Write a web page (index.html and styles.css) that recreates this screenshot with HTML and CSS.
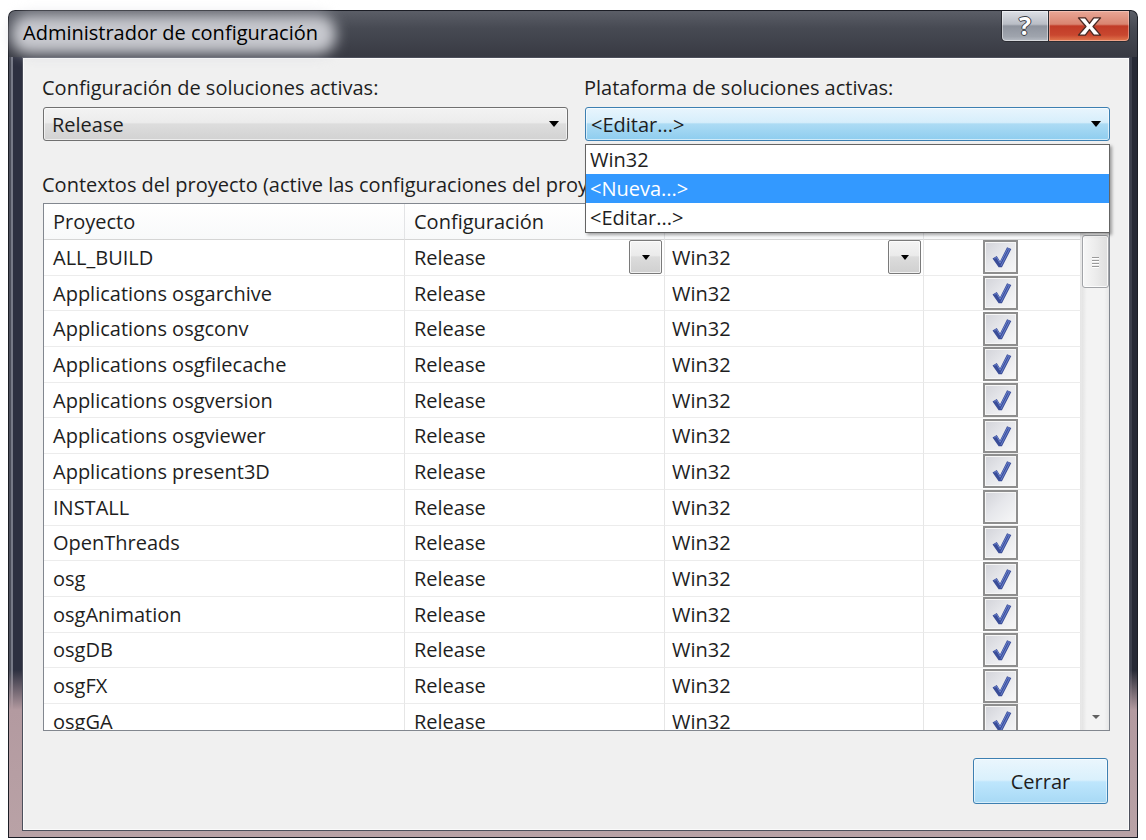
FILE: index.html
```html
<!DOCTYPE html>
<html lang="es">
<head>
<meta charset="utf-8">
<title>Administrador de configuración</title>
<link rel="stylesheet" href="styles.css">
</head>
<body>
<div class="window">
  <div class="titlebar">
    <div class="title"><span class="title-glow"></span><span class="title-text">Administrador de configuración</span></div>
    <div class="caption-buttons">
      <button class="cap cap-help" type="button"><span class="help-glyph">?</span></button>
      <button class="cap cap-close" type="button">
        <svg width="27" height="21" viewBox="0 0 22 17"><path d="M2 1.5H7.6L11 6L14.4 1.5H20L13.9 8.5L20 15.5H14.4L11 11L7.6 15.5H2L8.1 8.5Z" fill="#fff" stroke="#4a2a24" stroke-width="1.1" stroke-linejoin="round"/></svg>
      </button>
    </div>
  </div>

  <div class="client">
    <div class="selectors">
      <div class="field">
        <div class="field-label">Configuración de soluciones activas:</div>
        <div class="combo"><span class="combo-text">Release</span><span class="tri"></span></div>
      </div>
      <div class="field">
        <div class="field-label">Plataforma de soluciones activas:</div>
        <div class="combo-wrap">
          <div class="combo combo-open"><span class="combo-text">&lt;Editar...&gt;</span><span class="tri"></span></div>
          <ul class="combo-list">
            <li>Win32</li>
            <li class="selected">&lt;Nueva...&gt;</li>
            <li>&lt;Editar...&gt;</li>
          </ul>
        </div>
      </div>
    </div>

    <div class="contexts-label">Contextos del proyecto (active las configuraciones del proyecto que desea compilar o implementar):</div>

    <div class="grid">
      <div class="grid-body">
        <div class="row row-head">
          <div class="cell">Proyecto</div>
          <div class="cell">Configuración</div>
          <div class="cell"></div>
          <div class="cell"></div>
        </div>
        <div class="row">
          <div class="cell">ALL_BUILD</div>
          <div class="cell cell-edit">Release<span class="cell-drop"><span class="tri"></span></span></div>
          <div class="cell cell-edit">Win32<span class="cell-drop"><span class="tri"></span></span></div>
          <div class="cell cell-check"><span class="check on"><svg viewBox="0 0 33 32"><path d="M8 17.5L12.5 15L16 20.5L23.5 5.5L28 7.5L18 27H14.5Z" fill="#3a4d98"/><path d="M10 17.5L12.3 16.4L16.1 22.6L24.2 7L26 7.9L17 25.5" fill="none" stroke="#6f86d2" stroke-width="1"/></svg></span></div>
        </div>
        <div class="row">
          <div class="cell">Applications osgarchive</div>
          <div class="cell">Release</div>
          <div class="cell">Win32</div>
          <div class="cell cell-check"><span class="check on"><svg viewBox="0 0 33 32"><path d="M8 17.5L12.5 15L16 20.5L23.5 5.5L28 7.5L18 27H14.5Z" fill="#3a4d98"/><path d="M10 17.5L12.3 16.4L16.1 22.6L24.2 7L26 7.9L17 25.5" fill="none" stroke="#6f86d2" stroke-width="1"/></svg></span></div>
        </div>
        <div class="row">
          <div class="cell">Applications osgconv</div>
          <div class="cell">Release</div>
          <div class="cell">Win32</div>
          <div class="cell cell-check"><span class="check on"><svg viewBox="0 0 33 32"><path d="M8 17.5L12.5 15L16 20.5L23.5 5.5L28 7.5L18 27H14.5Z" fill="#3a4d98"/><path d="M10 17.5L12.3 16.4L16.1 22.6L24.2 7L26 7.9L17 25.5" fill="none" stroke="#6f86d2" stroke-width="1"/></svg></span></div>
        </div>
        <div class="row">
          <div class="cell">Applications osgfilecache</div>
          <div class="cell">Release</div>
          <div class="cell">Win32</div>
          <div class="cell cell-check"><span class="check on"><svg viewBox="0 0 33 32"><path d="M8 17.5L12.5 15L16 20.5L23.5 5.5L28 7.5L18 27H14.5Z" fill="#3a4d98"/><path d="M10 17.5L12.3 16.4L16.1 22.6L24.2 7L26 7.9L17 25.5" fill="none" stroke="#6f86d2" stroke-width="1"/></svg></span></div>
        </div>
        <div class="row">
          <div class="cell">Applications osgversion</div>
          <div class="cell">Release</div>
          <div class="cell">Win32</div>
          <div class="cell cell-check"><span class="check on"><svg viewBox="0 0 33 32"><path d="M8 17.5L12.5 15L16 20.5L23.5 5.5L28 7.5L18 27H14.5Z" fill="#3a4d98"/><path d="M10 17.5L12.3 16.4L16.1 22.6L24.2 7L26 7.9L17 25.5" fill="none" stroke="#6f86d2" stroke-width="1"/></svg></span></div>
        </div>
        <div class="row">
          <div class="cell">Applications osgviewer</div>
          <div class="cell">Release</div>
          <div class="cell">Win32</div>
          <div class="cell cell-check"><span class="check on"><svg viewBox="0 0 33 32"><path d="M8 17.5L12.5 15L16 20.5L23.5 5.5L28 7.5L18 27H14.5Z" fill="#3a4d98"/><path d="M10 17.5L12.3 16.4L16.1 22.6L24.2 7L26 7.9L17 25.5" fill="none" stroke="#6f86d2" stroke-width="1"/></svg></span></div>
        </div>
        <div class="row">
          <div class="cell">Applications present3D</div>
          <div class="cell">Release</div>
          <div class="cell">Win32</div>
          <div class="cell cell-check"><span class="check on"><svg viewBox="0 0 33 32"><path d="M8 17.5L12.5 15L16 20.5L23.5 5.5L28 7.5L18 27H14.5Z" fill="#3a4d98"/><path d="M10 17.5L12.3 16.4L16.1 22.6L24.2 7L26 7.9L17 25.5" fill="none" stroke="#6f86d2" stroke-width="1"/></svg></span></div>
        </div>
        <div class="row">
          <div class="cell">INSTALL</div>
          <div class="cell">Release</div>
          <div class="cell">Win32</div>
          <div class="cell cell-check"><span class="check"></span></div>
        </div>
        <div class="row">
          <div class="cell">OpenThreads</div>
          <div class="cell">Release</div>
          <div class="cell">Win32</div>
          <div class="cell cell-check"><span class="check on"><svg viewBox="0 0 33 32"><path d="M8 17.5L12.5 15L16 20.5L23.5 5.5L28 7.5L18 27H14.5Z" fill="#3a4d98"/><path d="M10 17.5L12.3 16.4L16.1 22.6L24.2 7L26 7.9L17 25.5" fill="none" stroke="#6f86d2" stroke-width="1"/></svg></span></div>
        </div>
        <div class="row">
          <div class="cell">osg</div>
          <div class="cell">Release</div>
          <div class="cell">Win32</div>
          <div class="cell cell-check"><span class="check on"><svg viewBox="0 0 33 32"><path d="M8 17.5L12.5 15L16 20.5L23.5 5.5L28 7.5L18 27H14.5Z" fill="#3a4d98"/><path d="M10 17.5L12.3 16.4L16.1 22.6L24.2 7L26 7.9L17 25.5" fill="none" stroke="#6f86d2" stroke-width="1"/></svg></span></div>
        </div>
        <div class="row">
          <div class="cell">osgAnimation</div>
          <div class="cell">Release</div>
          <div class="cell">Win32</div>
          <div class="cell cell-check"><span class="check on"><svg viewBox="0 0 33 32"><path d="M8 17.5L12.5 15L16 20.5L23.5 5.5L28 7.5L18 27H14.5Z" fill="#3a4d98"/><path d="M10 17.5L12.3 16.4L16.1 22.6L24.2 7L26 7.9L17 25.5" fill="none" stroke="#6f86d2" stroke-width="1"/></svg></span></div>
        </div>
        <div class="row">
          <div class="cell">osgDB</div>
          <div class="cell">Release</div>
          <div class="cell">Win32</div>
          <div class="cell cell-check"><span class="check on"><svg viewBox="0 0 33 32"><path d="M8 17.5L12.5 15L16 20.5L23.5 5.5L28 7.5L18 27H14.5Z" fill="#3a4d98"/><path d="M10 17.5L12.3 16.4L16.1 22.6L24.2 7L26 7.9L17 25.5" fill="none" stroke="#6f86d2" stroke-width="1"/></svg></span></div>
        </div>
        <div class="row">
          <div class="cell">osgFX</div>
          <div class="cell">Release</div>
          <div class="cell">Win32</div>
          <div class="cell cell-check"><span class="check on"><svg viewBox="0 0 33 32"><path d="M8 17.5L12.5 15L16 20.5L23.5 5.5L28 7.5L18 27H14.5Z" fill="#3a4d98"/><path d="M10 17.5L12.3 16.4L16.1 22.6L24.2 7L26 7.9L17 25.5" fill="none" stroke="#6f86d2" stroke-width="1"/></svg></span></div>
        </div>
        <div class="row">
          <div class="cell">osgGA</div>
          <div class="cell">Release</div>
          <div class="cell">Win32</div>
          <div class="cell cell-check"><span class="check on"><svg viewBox="0 0 33 32"><path d="M8 17.5L12.5 15L16 20.5L23.5 5.5L28 7.5L18 27H14.5Z" fill="#3a4d98"/><path d="M10 17.5L12.3 16.4L16.1 22.6L24.2 7L26 7.9L17 25.5" fill="none" stroke="#6f86d2" stroke-width="1"/></svg></span></div>
        </div>
      </div>
      <div class="vscroll">
        <div class="sb-btn"><span class="sb-up"></span></div>
        <div class="sb-thumb"><span class="grip"></span><span class="grip"></span><span class="grip"></span><span class="grip"></span></div>
        <div class="sb-track"></div>
        <div class="sb-btn"><span class="sb-down"></span></div>
      </div>
    </div>

    <div class="actions">
      <button class="btn-default" type="button">Cerrar</button>
    </div>
  </div>
</div>
</body>
</html>
```
FILE: styles.css
```css
* { box-sizing: border-box; }

body {
  margin: 0;
  background: #ffffff;
  font-family: "Open Sans", "Noto Sans", sans-serif;
  color: #1e1e1e;
}

/* Aero glass window frame */
.window {
  margin: 10px 0 0 8px;
  width: 1130px;
  height: 828px;
  padding: 0 8px 7px 14px;
  display: flex;
  flex-direction: column;
  border-radius: 7px 7px 0 0;
  box-shadow: inset 0 0 0 1px #1b1d25;
  background:
    linear-gradient(to bottom, #8a8d95 0, #5b5e67 1px, #474a53 18px, #383a43 47px) top / 100% 47px no-repeat,
    linear-gradient(to bottom, rgba(0,0,0,0) 0, rgba(0,0,0,0) 660px, #b39aa0 700px, #b9a2a6 100%),
    linear-gradient(to right, #1d1f27 0, #1d1f27 1px, #4a4d59 1px, #4a4d59 3px, #767986 3px, #767986 5px, #2d3040 5px, #2d3040 13px, #2d3040 calc(100% - 8px), #3d404d calc(100% - 8px), #3d404d calc(100% - 6px), #272a36 calc(100% - 6px));
}

.titlebar {
  height: 47px;
  flex: none;
  display: flex;
  justify-content: space-between;
  align-items: flex-start;
}

.title {
  position: relative;
  margin: 10px 0 0 1px;
  line-height: 26px;
}

.title-glow {
  position: absolute;
  left: -12px;
  right: -18px;
  top: -5px;
  bottom: -7px;
  border-radius: 18px;
  background: rgba(214, 215, 221, 0.9);
  filter: blur(7px);
}

.title-text {
  position: relative;
  font-size: 20px;
  color: #000;
}

.caption-buttons {
  display: flex;
  margin-top: 1px;
}

.cap {
  height: 31px;
  padding: 0;
  border: 1px solid #2b2c33;
  border-top: none;
  display: flex;
  align-items: center;
  justify-content: center;
  font-family: inherit;
}

.cap-help {
  width: 47px;
  border-radius: 0 0 0 5px;
  border-right: none;
  background: linear-gradient(to bottom, #dde0e6 0%, #b9bdc5 44%, #8f949e 50%, #9fa4ad 85%, #b7bcc4 100%);
  box-shadow: inset 0 0 0 1px rgba(255,255,255,0.45);
}

.help-glyph {
  font-size: 25px;
  font-weight: 700;
  line-height: 1;
  color: #fff;
  text-shadow: 1px 0 0 #3b3e46, -1px 0 0 #3b3e46, 0 1px 0 #3b3e46, 0 -1px 0 #3b3e46;
  margin-top: -2px;
}

.cap-close {
  width: 82px;
  border-radius: 0 0 5px 0;
  background: linear-gradient(to bottom, #e9a796 0%, #d98470 44%, #c13b27 50%, #c9472f 80%, #e2794f 100%);
  box-shadow: inset 0 0 0 1px rgba(255,220,210,0.45);
}

.cap-close svg { display: block; }

/* dialog client area */
.client {
  flex: 1;
  background: #f0f0f0;
  border: 1px solid #4d505c;
  box-shadow: inset 0 0 0 1px #fbfbfb;
  padding: 17px 19px 0 20px;
  display: flex;
  flex-direction: column;
}

.selectors {
  display: grid;
  grid-template-columns: 1fr 1fr;
  column-gap: 17px;
}

.field-label {
  font-size: 20px;
  line-height: 26px;
  margin-left: -1px;
}

.combo {
  margin-top: 6px;
  height: 34px;
  border: 1px solid #707070;
  border-radius: 3px;
  background: linear-gradient(to bottom, #f3f3f3 0%, #ececec 45%, #dddddd 50%, #d2d2d2 100%);
  box-shadow: inset 0 0 0 1px rgba(255,255,255,0.6);
  display: flex;
  align-items: center;
  justify-content: space-between;
  padding: 0 8px 0 8px;
  font-size: 20px;
}

.tri {
  width: 0;
  height: 0;
  border-left: 5px solid transparent;
  border-right: 5px solid transparent;
  border-top: 6px solid #000;
}

.combo-wrap {
  position: relative;
}

.combo-open {
  border-color: #3c7fb1;
  background: linear-gradient(to bottom, #e8f5fd 0%, #d6eefb 45%, #acdbf4 50%, #8ecdef 100%);
  padding-left: 5px;
}

.combo-list {
  position: absolute;
  left: 0;
  right: 0;
  top: calc(100% + 3px);
  margin: 0;
  padding: 0;
  list-style: none;
  background: #fff;
  border: 1px solid #646464;
  box-shadow: 2px 2px 3px rgba(0, 0, 0, 0.35);
  z-index: 5;
}

.combo-list li {
  height: 29px;
  line-height: 29px;
  padding-left: 4px;
  font-size: 20px;
  color: #1e1e1e;
}

.combo-list li.selected {
  background: #3399ff;
  color: #fff;
}

.contexts-label {
  margin-top: 31px;
  margin-left: -1px;
  font-size: 20px;
  line-height: 26px;
  white-space: nowrap;
  overflow: hidden;
}

/* project grid */
.grid {
  margin-top: 5px;
  height: 528px;
  border: 1px solid #82878f;
  background: #fff;
  display: flex;
  overflow: hidden;
}

.grid-body {
  flex: 1;
  overflow: hidden;
}

.row {
  display: grid;
  grid-template-columns: 361px 260px 259px 157px;
  height: 35.7px;
}

.row-head {
  height: 36px;
}

.cell {
  border-right: 1px solid #e6e6e6;
  border-bottom: 1px solid #ececec;
  padding-left: 9px;
  font-size: 20px;
  display: flex;
  align-items: center;
  white-space: nowrap;
  overflow: hidden;
}

.row .cell:nth-child(3) { padding-left: 7px; }

.row-head .cell {
  background: linear-gradient(to bottom, #ffffff, #f8f9fa);
  border-bottom-color: #d5d5d5;
  border-right-color: #e3e4e6;
}

.cell-edit {
  justify-content: space-between;
  padding-right: 2px;
}

.cell-drop {
  width: 33px;
  height: 34px;
  border: 1px solid #7a7a7a;
  border-radius: 2px;
  background: linear-gradient(to bottom, #f4f4f4 0%, #ebebeb 45%, #dcdcdc 50%, #d0d0d0 100%);
  box-shadow: inset 0 0 0 1px rgba(255,255,255,0.7);
  display: flex;
  align-items: center;
  justify-content: center;
}

.cell-drop .tri {
  border-left-width: 4px;
  border-right-width: 4px;
  border-top-width: 5px;
}

.cell-check {
  justify-content: center;
  padding-left: 0;
  padding-right: 4px;
}

.check {
  width: 35px;
  height: 34px;
  flex: none;
  border: 2px solid #8e8e8e;
  background: linear-gradient(135deg, #d2d3d9 0%, #e6e7eb 45%, #f7f7f8 100%);
  box-shadow: inset 0 0 0 1px #f6f6f6;
  display: flex;
  align-items: center;
  justify-content: center;
}

.check svg {
  width: 31px;
  height: 30px;
  display: block;
}

/* vertical scrollbar */
.vscroll {
  width: 28px;
  flex: none;
  display: flex;
  flex-direction: column;
  background: linear-gradient(to right, #e4e4e4 0%, #f3f3f3 18%, #f3f3f3 82%, #e7e7e7 100%);
  border-left: 1px solid #e8e8e8;
}

.sb-btn {
  height: 26px;
  flex: none;
  display: flex;
  align-items: center;
  justify-content: center;
}

.sb-up, .sb-down {
  width: 0;
  height: 0;
  border-left: 4px solid transparent;
  border-right: 4px solid transparent;
}

.sb-up { border-bottom: 4px solid #606060; }
.sb-down { border-top: 4px solid #606060; }

.sb-thumb {
  margin-top: 5px;
  height: 53px;
  flex: none;
  border: 1px solid #a2a4a8;
  border-radius: 3px;
  background: linear-gradient(to right, #f7f7f7 0%, #ececec 50%, #dedede 100%);
  box-shadow: inset 0 0 0 1px rgba(255,255,255,0.8);
  display: flex;
  flex-direction: column;
  align-items: center;
  justify-content: center;
  gap: 2px;
}

.grip {
  width: 7px;
  height: 1px;
  background: #9a9a9a;
  box-shadow: 0 1px 0 #ffffff;
}

.sb-track { flex: 1; }

/* bottom button row */
.actions {
  margin-top: 27px;
  display: flex;
  justify-content: flex-end;
}

.btn-default {
  width: 135px;
  height: 46px;
  margin-right: 2px;
  border: 1px solid #3c7fb1;
  border-radius: 3px;
  background: linear-gradient(to bottom, #eaf6fd 0%, #d9f0fc 48%, #bee6fd 52%, #a7d9f5 100%);
  box-shadow: inset 0 0 0 1px rgba(255,255,255,0.55);
  font-family: inherit;
  font-size: 20px;
  color: #1e1e1e;
  padding: 0;
}
```
